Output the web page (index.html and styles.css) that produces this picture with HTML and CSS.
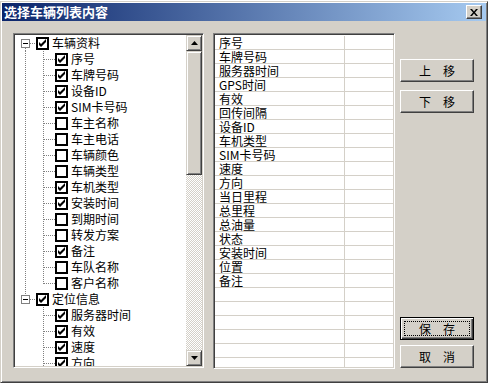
FILE: index.html
```html
<!DOCTYPE html>
<html lang="zh-CN">
<head>
   <meta charset="UTF-8">
   <title>选择车辆列表内容</title>
   <link rel="stylesheet" href="styles.css">
</head>
<body>
<div class="strip"></div>
<div class="dialog">
   <div class="titlebar">
       <span class="title">选择车辆列表内容</span>
       <button class="close">
           <svg width="8" height="7" viewBox="0 0 8 7"><path d="M0 0h2l2 2.5 2-2.5h2l-3 3.5 3 3.5h-2l-2-2.5-2 2.5h-2l3-3.5z" fill="#000"/></svg>
       </button>
   </div>

   <div class="body">
       <!-- tree of available columns -->
       <div class="tree-box">
           <div class="tree">
               <div class="row root first"><span class="exp"></span><span class="cb on"></span><span class="txt">车辆资料</span></div>
               <div class="kids">
                   <div class="row kid"><span class="cb on"></span><span class="txt">序号</span></div>
                   <div class="row kid"><span class="cb on"></span><span class="txt">车牌号码</span></div>
                   <div class="row kid"><span class="cb on"></span><span class="txt">设备ID</span></div>
                   <div class="row kid"><span class="cb on"></span><span class="txt">SIM卡号码</span></div>
                   <div class="row kid"><span class="cb"></span><span class="txt">车主名称</span></div>
                   <div class="row kid"><span class="cb"></span><span class="txt">车主电话</span></div>
                   <div class="row kid"><span class="cb"></span><span class="txt">车辆颜色</span></div>
                   <div class="row kid"><span class="cb"></span><span class="txt">车辆类型</span></div>
                   <div class="row kid"><span class="cb on"></span><span class="txt">车机类型</span></div>
                   <div class="row kid"><span class="cb on"></span><span class="txt">安装时间</span></div>
                   <div class="row kid"><span class="cb"></span><span class="txt">到期时间</span></div>
                   <div class="row kid"><span class="cb"></span><span class="txt">转发方案</span></div>
                   <div class="row kid"><span class="cb on"></span><span class="txt">备注</span></div>
                   <div class="row kid"><span class="cb"></span><span class="txt">车队名称</span></div>
                   <div class="row kid last"><span class="cb"></span><span class="txt">客户名称</span></div>
               </div>
               <div class="row root second"><span class="exp"></span><span class="cb on"></span><span class="txt">定位信息</span></div>
               <div class="kids">
                   <div class="row kid solo"><span class="cb on"></span><span class="txt">服务器时间</span></div>
                   <div class="row kid solo"><span class="cb on"></span><span class="txt">有效</span></div>
                   <div class="row kid solo"><span class="cb on"></span><span class="txt">速度</span></div>
                   <div class="row kid solo"><span class="cb on"></span><span class="txt">方向</span></div>
               </div>
           </div>
           <div class="vscroll">
               <div class="sb-btn"><svg width="7" height="4" viewBox="0 0 7 4"><path d="M3.5 0L7 4H0z" fill="#000"/></svg></div>
               <div class="sb-thumb"></div>
               <div class="sb-track"></div>
               <div class="sb-btn"><svg width="7" height="4" viewBox="0 0 7 4"><path d="M0 0h7L3.5 4z" fill="#000"/></svg></div>
           </div>
       </div>

       <!-- selected columns -->
       <div class="list-box">
           <div class="lrow"><span class="c1">序号</span><span class="c2"></span></div>
           <div class="lrow"><span class="c1">车牌号码</span><span class="c2"></span></div>
           <div class="lrow"><span class="c1">服务器时间</span><span class="c2"></span></div>
           <div class="lrow"><span class="c1">GPS时间</span><span class="c2"></span></div>
           <div class="lrow"><span class="c1">有效</span><span class="c2"></span></div>
           <div class="lrow"><span class="c1">回传间隔</span><span class="c2"></span></div>
           <div class="lrow"><span class="c1">设备ID</span><span class="c2"></span></div>
           <div class="lrow"><span class="c1">车机类型</span><span class="c2"></span></div>
           <div class="lrow"><span class="c1">SIM卡号码</span><span class="c2"></span></div>
           <div class="lrow"><span class="c1">速度</span><span class="c2"></span></div>
           <div class="lrow"><span class="c1">方向</span><span class="c2"></span></div>
           <div class="lrow"><span class="c1">当日里程</span><span class="c2"></span></div>
           <div class="lrow"><span class="c1">总里程</span><span class="c2"></span></div>
           <div class="lrow"><span class="c1">总油量</span><span class="c2"></span></div>
           <div class="lrow"><span class="c1">状态</span><span class="c2"></span></div>
           <div class="lrow"><span class="c1">安装时间</span><span class="c2"></span></div>
           <div class="lrow"><span class="c1">位置</span><span class="c2"></span></div>
           <div class="lrow"><span class="c1">备注</span><span class="c2"></span></div>
           <div class="lrow"><span class="c1"></span><span class="c2"></span></div>
           <div class="lrow"><span class="c1"></span><span class="c2"></span></div>
           <div class="lrow"><span class="c1"></span><span class="c2"></span></div>
           <div class="lrow"><span class="c1"></span><span class="c2"></span></div>
           <div class="lrow"><span class="c1"></span><span class="c2"></span></div>
           <div class="lrow"><span class="c1"></span><span class="c2"></span></div>
       </div>

       <div class="actions">
           <div class="btn-group">
               <button class="btn">上　移</button>
               <button class="btn">下　移</button>
           </div>
           <div class="btn-group bottom">
               <button class="btn default"><span class="focus">保　存</span></button>
               <button class="btn">取　消</button>
           </div>
       </div>
   </div>
</div>
</body>
</html>
```

FILE: styles.css
```css
body {
    margin: 0;
    background: #fff;
    font-family: "Noto Sans CJK SC", "Liberation Sans", sans-serif;
    font-size: 12px;
    color: #000;
}

.strip {
    height: 1px;
    background: #fff;
}

.dialog {
    width: 488px;
    height: 382px;
    box-sizing: border-box;
    background: #d4d0c8;
    border: 1px solid;
    border-color: #d4d0c8 #404040 #404040 #d4d0c8;
    box-shadow: inset 1px 1px #fff, inset -1px -1px #808080;
    padding: 1px;
    display: flex;
    flex-direction: column;
}

.titlebar {
    height: 18px;
    display: flex;
    align-items: center;
    padding-left: 2px;
    background: linear-gradient(to right, #0a246a, #a6caf0);
}

.title {
    color: #fff;
    font-weight: bold;
    font-size: 13px;
    line-height: 18px;
}

.close {
    margin-left: auto;
    margin-right: 4px;
    width: 16px;
    height: 14px;
    padding: 0;
    display: flex;
    align-items: center;
    justify-content: center;
    background: #d4d0c8;
    border: 1px solid;
    border-color: #fff #404040 #404040 #fff;
    box-shadow: inset -1px -1px #808080;
}

.body {
    flex: 1;
    display: flex;
    padding: 12px 0 0 11px;
}

/* sunken boxes */
.tree-box,
.list-box {
    box-sizing: border-box;
    border: 1px solid;
    border-color: #808080 #fff #fff #808080;
    box-shadow: inset 1px 1px #404040, inset -1px -1px #d4d0c8;
    padding: 1px;
    background: #fff;
}

.tree-box {
    width: 191px;
    height: 335px;
    display: flex;
}

.tree {
    flex: 1;
    overflow: hidden;
}

.row {
    height: 16px;
    display: flex;
    align-items: center;
    line-height: 16px;
    white-space: nowrap;
    background-repeat: no-repeat;
}

.root {
    padding-left: 6px;
}

.kid {
    padding-left: 40px;
}

/* dotted tree lines */
.first {
    background-image:
        repeating-linear-gradient(to right, #808080 0 1px, transparent 1px 2px),
        repeating-linear-gradient(to bottom, #808080 0 1px, transparent 1px 2px),
        repeating-linear-gradient(to bottom, #808080 0 1px, transparent 1px 2px);
    background-size: 6px 1px, 1px 3px, 1px 2px;
    background-position: 15px 8px, 10px 13px, 28px 14px;
}

.second {
    background-image:
        repeating-linear-gradient(to right, #808080 0 1px, transparent 1px 2px),
        repeating-linear-gradient(to bottom, #808080 0 1px, transparent 1px 2px),
        repeating-linear-gradient(to bottom, #808080 0 1px, transparent 1px 2px);
    background-size: 6px 1px, 1px 3px, 1px 2px;
    background-position: 15px 8px, 10px 0, 28px 14px;
}

.kid {
    background-image:
        repeating-linear-gradient(to bottom, #808080 0 1px, transparent 1px 2px),
        repeating-linear-gradient(to bottom, #808080 0 1px, transparent 1px 2px),
        repeating-linear-gradient(to right, #808080 0 1px, transparent 1px 2px);
    background-size: 1px 16px, 1px 16px, 11px 1px;
    background-position: 10px 0, 28px 0, 29px 8px;
}

.kid.last {
    background-size: 1px 16px, 1px 9px, 11px 1px;
}

.kid.solo {
    background-size: 0 0, 1px 16px, 11px 1px;
}

.exp {
    width: 9px;
    height: 9px;
    box-sizing: border-box;
    border: 1px solid #808080;
    background: linear-gradient(#000, #000) center / 5px 1px no-repeat, #fff;
    margin-right: 6px;
}

.cb {
    width: 13px;
    height: 13px;
    flex: none;
    box-sizing: border-box;
    border: 2px solid #000;
    background: #fff;
}

.cb.on {
    background: #fff url("data:image/svg+xml,%3Csvg xmlns='http://www.w3.org/2000/svg' width='9' height='9'%3E%3Cpath d='M1 3l2 2 5-5v3l-5 5-2-2z' fill='%23000'/%3E%3C/svg%3E") center no-repeat;
}

.txt {
    margin-left: 3px;
}

/* scrollbar */
.vscroll {
    width: 16px;
    display: flex;
    flex-direction: column;
}

.sb-btn,
.sb-thumb {
    box-sizing: border-box;
    background: #d4d0c8;
    border: 1px solid;
    border-color: #d4d0c8 #404040 #404040 #d4d0c8;
    box-shadow: inset 1px 1px #fff, inset -1px -1px #808080;
}

.sb-btn {
    height: 16px;
    display: flex;
    align-items: center;
    justify-content: center;
}

.sb-thumb {
    height: 124px;
}

.sb-track {
    flex: 1;
    background: repeating-conic-gradient(#fff 0 25%, #d4d0c8 0 50%) 0 0 / 2px 2px;
}

/* list */
.list-box {
    width: 182px;
    height: 336px;
    margin-left: 9px;
    padding-top: 2px;
    overflow: hidden;
}

.lrow {
    display: flex;
    height: 14px;
    box-sizing: border-box;
    border-bottom: 1px solid #d4d0c8;
    line-height: 13px;
}

.c1 {
    width: 130px;
    box-sizing: border-box;
    padding-left: 4px;
    border-right: 1px solid #d4d0c8;
    white-space: nowrap;
}

.c2 {
    flex: 1;
}

/* buttons */
.actions {
    width: 74px;
    margin-left: 5px;
    padding: 26px 0 16px;
    display: flex;
    flex-direction: column;
    justify-content: space-between;
    height: 351px;
    box-sizing: border-box;
}

.btn-group {
    display: flex;
    flex-direction: column;
    gap: 8px;
}

.btn-group.bottom {
    gap: 5px;
}

.btn {
    width: 74px;
    height: 23px;
    padding: 0;
    font-family: inherit;
    font-size: 12px;
    color: #000;
    background: #d4d0c8;
    border: 1px solid;
    border-color: #fff #404040 #404040 #fff;
    box-shadow: inset -1px -1px #808080;
    display: flex;
    align-items: center;
    justify-content: center;
}

.btn.default {
    border: 1px solid #000;
    box-shadow: inset 1px 1px #fff, inset -1px -1px #404040, inset -2px -2px #808080;
    padding: 3px;
}

.focus {
    flex: 1;
    align-self: stretch;
    display: flex;
    align-items: center;
    justify-content: center;
    border: 1px dotted #000;
}
```
